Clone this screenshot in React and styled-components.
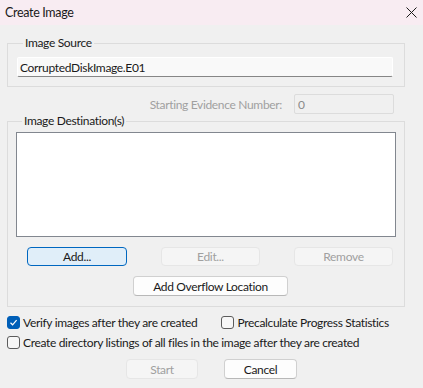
import React from "react";
import styled, { createGlobalStyle } from "styled-components";

const Global = createGlobalStyle`
  html, body { margin: 0; padding: 0; background: #f0f0f0; }
  body { font-family: Lato, "Noto Sans", sans-serif; font-size: 12px; letter-spacing: -0.33px; color: #1a1a1a; }
  * { box-sizing: border-box; }
`;

const Window = styled.div`
  width: 423px;
  height: 388px;
  background: #f0f0f0;
  display: flex;
  flex-direction: column;
  overflow: hidden;
`;

const TitleBar = styled.div`
  height: 25px;
  background: #f8ecf2;
  display: flex;
  align-items: center;
  justify-content: space-between;
  padding: 0 6px 0 5px;
  font-size: 12.5px;
  color: #1a1a1a;
`;

const CloseIcon = styled.svg`
  width: 11px;
  height: 11px;
  display: block;
`;

const Content = styled.div`
  display: flex;
  flex-direction: column;
  padding: 0 18px 0 7px;
`;

const Group = styled.fieldset`
  margin: ${(p) => p.$mt || 0}px 0 0 0;
  padding: ${(p) => p.$pad};
  border: 1px solid #dcdcdc;
  min-inline-size: 0;
  display: flex;
  flex-direction: column;
`;

const Legend = styled.legend`
  padding: 0 2px;
  margin-left: 6px;
  line-height: 14px;
  color: #1a1a1a;
`;

const ReadOnlyBox = styled.div`
  height: 20px;
  background: #f9f9f9;
  border: 1px solid #ffffff;
  border-bottom-color: #868686;
  border-radius: 2px;
  display: flex;
  align-items: center;
  padding-left: 2px;
  color: #1a1a1a;
`;

const EvidenceRow = styled.div`
  display: flex;
  align-items: center;
  justify-content: flex-end;
  margin-top: 7px;
  padding-right: 11px;
  gap: 12px;
  height: 20px;
`;

const DisabledLabel = styled.span`
  color: #a0a0a0;
`;

const DisabledInput = styled.div`
  width: 100px;
  height: 20px;
  border: 1px solid #dcdcdc;
  border-radius: 2px;
  background: #f0f0f0;
  color: #8a8a8a;
  display: flex;
  align-items: center;
  padding-left: 3px;
`;

const ListBox = styled.div`
  height: 105px;
  background: #ffffff;
  border: 1px solid #82878f;
`;

const ButtonRow = styled.div`
  display: flex;
  justify-content: space-between;
  padding: 0 3px 0 11px;
  margin-top: 10px;
`;

const Button = styled.button`
  font-family: inherit;
  font-size: inherit;
  letter-spacing: inherit;
  width: ${(p) => p.$w}px;
  height: ${(p) => p.$h || 20}px;
  margin: 0;
  padding: 0;
  border-radius: 4px;
  cursor: default;
  color: ${(p) => (p.$variant === "disabled" ? "#a0a0a0" : "#1a1a1a")};
  background: ${(p) =>
    p.$variant === "primary" ? "#e0eef9" : p.$variant === "disabled" ? "#f5f5f5" : "#fdfdfd"};
  border: 1px solid
    ${(p) =>
      p.$variant === "primary" ? "#0067c0" : p.$variant === "disabled" ? "#e6e6e6" : "#d0d0d0"};
  ${(p) => (p.$variant === "normal" ? "border-bottom-color: #b8b8b8;" : "")}
`;

const OverflowRow = styled.div`
  display: flex;
  margin-top: 10px;
  padding-left: 117px;
`;

const Options = styled.div`
  display: flex;
  flex-direction: column;
  gap: 4px;
  padding-top: 7px;
`;

const OptionRow = styled.div`
  display: flex;
  align-items: center;
  height: 16px;
`;

const CheckLabel = styled.label`
  display: flex;
  align-items: center;
  gap: 3px;
  margin-right: ${(p) => p.$mr || 0}px;
  color: #1a1a1a;
  white-space: nowrap;
`;

const Box = styled.span`
  width: 13px;
  height: 13px;
  border-radius: 3px;
  display: inline-flex;
  align-items: center;
  justify-content: center;
  background: ${(p) => (p.$checked ? "#005fb8" : "#f7f7f7")};
  border: 1px solid ${(p) => (p.$checked ? "#005fb8" : "#5c5c5c")};
`;

const Footer = styled.div`
  display: flex;
  justify-content: center;
  gap: 26px;
  margin-top: 9px;
`;

function Check({ checked, label, mr }) {
  return (
    <CheckLabel $mr={mr}>
      <Box $checked={checked}>
        {checked && (
          <svg width="9" height="9" viewBox="0 0 9 9">
            <path d="M1.5 4.8 L3.6 6.8 L7.6 2.2" fill="none" stroke="#fff" strokeWidth="1.2" />
          </svg>
        )}
      </Box>
      {label}
    </CheckLabel>
  );
}

export default function App() {
  return (
    <Window>
      <Global />
      <TitleBar>
        <span>Create Image</span>
        <CloseIcon viewBox="0 0 11 11">
          <path d="M0.5 0.5 L10.5 10.5 M10.5 0.5 L0.5 10.5" stroke="#1a1a1a" strokeWidth="1" />
        </CloseIcon>
      </TitleBar>
      <Content>
        <Group $mt={11} $pad="7px 11px 9px 9px">
          <Legend>Image Source</Legend>
          <ReadOnlyBox>CorruptedDiskImage.E01</ReadOnlyBox>
        </Group>
        <EvidenceRow>
          <DisabledLabel>Starting Evidence Number:</DisabledLabel>
          <DisabledInput>0</DisabledInput>
        </EvidenceRow>
        <Group $mt={0} $pad="4px 8px 10px 8px">
          <Legend>Image Destination(s)</Legend>
          <ListBox />
          <ButtonRow>
            <Button $w={100} $h={19} $variant="primary">Add...</Button>
            <Button $w={99} $h={19} $variant="disabled">Edit...</Button>
            <Button $w={99} $h={19} $variant="disabled">Remove</Button>
          </ButtonRow>
          <OverflowRow>
            <Button $w={155} $h={20} $variant="normal">Add Overflow Location</Button>
          </OverflowRow>
        </Group>
        <Options>
          <OptionRow>
            <Check checked label="Verify images after they are created" mr={24} />
            <Check label="Precalculate Progress Statistics" />
          </OptionRow>
          <OptionRow>
            <Check label="Create directory listings of all files in the image after they are created" />
          </OptionRow>
        </Options>
      </Content>
      <Footer>
        <Button $w={72} $h={20} $variant="disabled">Start</Button>
        <Button $w={73} $h={20} $variant="normal">Cancel</Button>
      </Footer>
    </Window>
  );
}
